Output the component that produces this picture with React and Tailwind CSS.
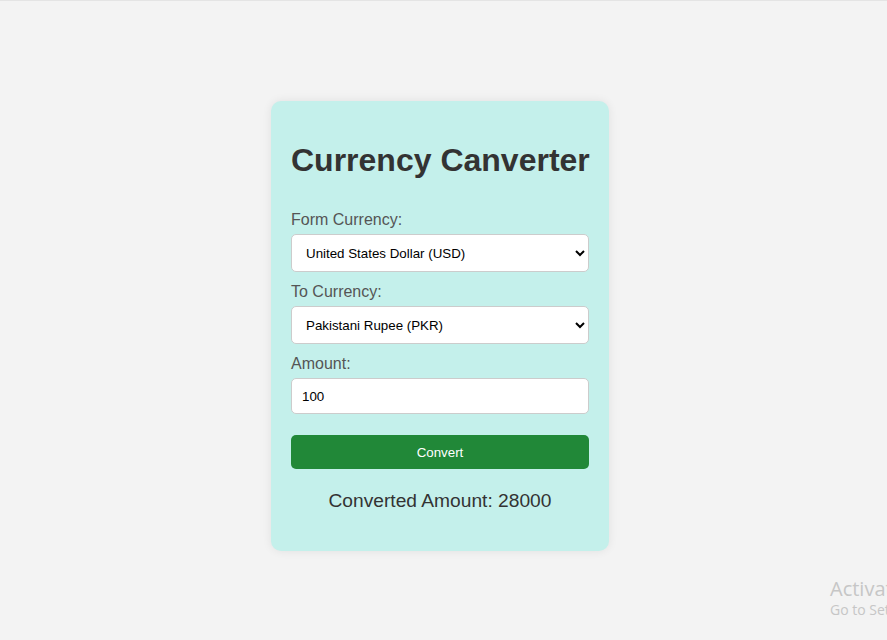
import React, { useState } from "react";

const rates = { USD: 1, PKR: 280, EUR: 0.92, GBP: 0.79, INR: 83 };

export default function App() {
    const [from, setFrom] = useState("USD");
    const [to, setTo] = useState("PKR");
    const [amount, setAmount] = useState("100");
    const [result, setResult] = useState(28000);

    const convert = () => {
        const v = (Number(amount) / rates[from]) * rates[to];
        setResult(Math.round(v * 100) / 100);
    };

    const field = "block w-full px-[10px] bg-white border border-[#cccccc] rounded-[5px] text-[13.33px] text-black outline-none";
    const label = "block text-[16px] leading-[18px] text-[#555555] mb-[5px]";

    return (
        <div className="relative h-[640px] overflow-hidden bg-[#f3f3f3] border-t border-[#e4e4e4] font-['Liberation_Sans',Arial,sans-serif]">
            <div className="flex justify-center pr-[7px] pt-[100px]">
                <div className="w-[338px] bg-[#c4f0eb] rounded-[10px] shadow-[0_0_10px_rgba(0,0,0,0.08)] px-5 pt-5 pb-[39px]">
                    <h1 className="mt-[21px] mb-[32px] text-[32px] leading-[37px] font-bold text-[#333333] whitespace-nowrap">
                        Currency Canverter
                    </h1>

                    <label className={label}>Form Currency:</label>
                    <select className={`${field} h-[38px]`} value={from} onChange={e => setFrom(e.target.value)}>
                        <option value="USD">United States Dollar (USD)</option>
                        <option value="PKR">Pakistani Rupee (PKR)</option>
                        <option value="EUR">Euro (EUR)</option>
                        <option value="GBP">British Pound (GBP)</option>
                        <option value="INR">Indian Rupee (INR)</option>
                    </select>

                    <label className={`${label} mt-[11px]`}>To Currency:</label>
                    <select className={`${field} h-[38px]`} value={to} onChange={e => setTo(e.target.value)}>
                        <option value="USD">United States Dollar (USD)</option>
                        <option value="PKR">Pakistani Rupee (PKR)</option>
                        <option value="EUR">Euro (EUR)</option>
                        <option value="GBP">British Pound (GBP)</option>
                        <option value="INR">Indian Rupee (INR)</option>
                    </select>

                    <label className={`${label} mt-[11px]`}>Amount:</label>
                    <input
                        type="number"
                        className={`${field} h-[36px]`}
                        value={amount}
                        onChange={e => setAmount(e.target.value)}
                    />

                    <button
                        onClick={convert}
                        className="mt-[21px] w-full h-[34px] pt-[2px] rounded-[5px] bg-[#218838] text-white text-[13.33px] cursor-pointer"
                    >
                        Convert
                    </button>

                    <p className="mt-[21px] text-center text-[19.2px] leading-[22px] text-[#333333]">
                        Converted Amount: {result}
                    </p>
                </div>
            </div>

            {/* windows watermark */}
            <div className="absolute left-[830px] top-[576px] whitespace-nowrap text-[#c6c6c6] font-['Open_Sans',sans-serif]">
                <div className="text-[20px] leading-[24px]">Activate Windows</div>
                <div className="text-[14px] leading-[18px]">Go to Settings to activate Windows.</div>
            </div>
        </div>
    );
}
